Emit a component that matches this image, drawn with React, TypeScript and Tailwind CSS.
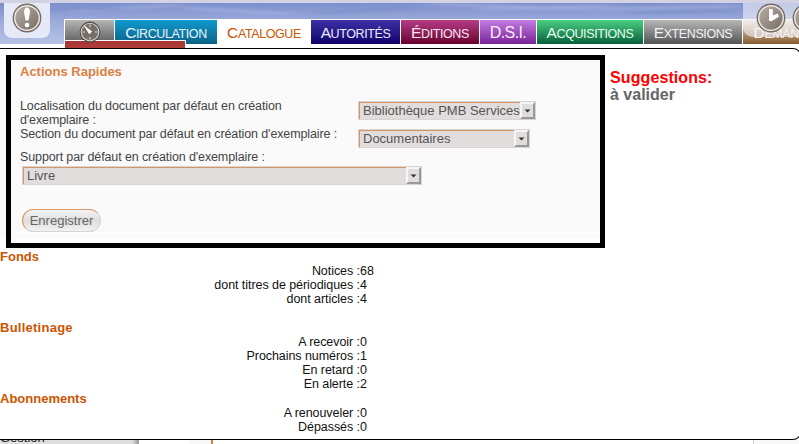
import React from 'react';

type Tab = { label: string; width: string; colors: string; big?: boolean };

const tabs: Tab[] = [
  { label: 'Circulation', width: 'w-[103px]', colors: 'from-[#1199cf] to-[#0b6286] text-[#e6f5fb]' },
  { label: 'Catalogue', width: 'w-[93px]', colors: 'from-white to-white text-[#cc5500]' },
  { label: 'Autorités', width: 'w-[90px]', colors: 'from-[#3e30a8] to-[#11006a] text-[#eeeaff]' },
  { label: 'Éditions', width: 'w-[79px]', colors: 'from-[#b73b88] to-[#68002e] text-[#fbe4f1]' },
  { label: 'D.S.I.', width: 'w-[57px]', colors: 'from-[#c17be0] to-[#7a2199] text-[#f8ebff]', big: true },
  { label: 'Acquisitions', width: 'w-[107px]', colors: 'from-[#4bd083] to-[#04613a] text-[#e5fff0]' },
  { label: 'Extensions', width: 'w-[99px]', colors: 'from-[#b8b8b8] to-[#555555] text-[#f3f3f3]' },
  { label: 'Demandes', width: 'w-[92px]', colors: 'from-[#efe5cf] to-[#875b30] text-[#fffaf0]' },
];

function Disc({ size, children }: { size: number; children?: React.ReactNode }) {
  return (
    <svg width={size} height={size} viewBox="0 0 30 30" className="block shrink-0">
      <defs>
        <linearGradient id="disc" x1="0" y1="0" x2="1" y2="1">
          <stop offset="0" stopColor="#b8b0a8" />
          <stop offset="1" stopColor="#756b62" />
        </linearGradient>
      </defs>
      <circle cx="15" cy="15" r="14.4" fill="#756c65" />
      <circle cx="15" cy="15" r="12.3" fill="url(#disc)" stroke="#eee9e5" strokeWidth="1.4" />
      {children}
    </svg>
  );
}

function Gauge() {
  return (
    <svg width="22" height="22" viewBox="0 0 22 22" className="block">
      <circle cx="11" cy="11" r="10.4" fill="#4a4541" />
      <circle cx="11" cy="11" r="8.8" fill="#766e67" stroke="#d8d3ce" strokeWidth="1.1" />
      <path d="M11 3.5v2.5M11 16v2.5M3.5 11h2.5M16 11h2.5" stroke="#ded9d3" strokeWidth="1.2" />
      <path d="M5.6 5.2L12.5 10.5L10.5 12.8Z" fill="#fff" stroke="#fff" strokeWidth="1" />
    </svg>
  );
}

function Select({ value, className }: { value: string; className: string }) {
  return (
    <div className={`flex h-[19px] border border-[#d7d5d4] bg-[#e1dddc] ${className}`}>
      <div className="min-w-0 flex-1 whitespace-nowrap border-l border-t border-[#d99560] pl-[3px] text-[13px] leading-[16px] text-[#555]">
        {value}
      </div>
      <div className="flex w-[15px] shrink-0 items-center justify-center border-2 border-b-[#999] border-l-[#f5f5f5] border-r-[#999] border-t-[#f5f5f5] bg-[#e1dddc]">
        <svg width="7" height="4" viewBox="0 0 7 4"><path d="M0.5 0.5h6L3.5 3.6Z" fill="#333" /></svg>
      </div>
    </div>
  );
}

function Group({ title, rows, className, titleClass = '' }: { title: string; rows: [string, string][]; className: string; titleClass?: string }) {
  return (
    <section className={`shrink-0 ${className}`}>
      <h2 className={`h-[15px] text-[13px] font-bold leading-[15px] text-[#cc5500] ${titleClass}`}>{title}</h2>
      {rows.map(([name, count]) => (
        <div key={name} className="flex h-[14px] text-[12.5px] leading-[14px] text-[#111]">
          <span className="w-[360px] whitespace-nowrap text-right tracking-[-0.06px]">{name} :</span>
          <span>{count}</span>
        </div>
      ))}
    </section>
  );
}

export default function App() {
  return (
    <div className="relative flex h-[444px] w-[799px] flex-col overflow-hidden bg-white font-['Liberation_Sans',Arial,sans-serif]">
      <header className="relative h-[48px] shrink-0">
        <div className="h-[3px] bg-[#d2d2e3]" />
        <div className="h-[41px] bg-linear-to-b from-[#7d8fcc] via-[#a0aedc] to-[#b5c2e5]">
          <svg width="799" height="17" viewBox="0 0 799 17" preserveAspectRatio="none">
            <defs><filter id="soft"><feGaussianBlur stdDeviation="8 1.5" /></filter></defs>
            <g filter="url(#soft)" fill="none" stroke="#b2c4eb" strokeWidth="2" opacity=".6">
              <path d="M70 8L180 2M185 5L290 11M430 1L590 6M480 6L610 3M600 6L740 3" />
              <path d="M10 8L120 5M320 10L410 5M630 10L730 8" stroke="#6f83c5" />
            </g>
          </svg>
        </div>
        <nav className="absolute left-[64px] top-[19px] flex h-[25px] border-l border-t border-white bg-white">
          <div className="w-[50px] border-r border-white bg-linear-to-b from-[#b5b5b5] to-[#5c5c5c]" />
          {tabs.map((t) => (
            <div key={t.label} className={`flex h-[24px] shrink-0 justify-center border-r border-white bg-linear-to-b ${t.width} ${t.colors}`}>
              <span className={t.big ? 'block whitespace-nowrap pt-[1px] text-[16px] leading-[24px] tracking-[-0.6px]' : 'block whitespace-nowrap pt-[1px] text-[12.5px] uppercase leading-[24px] tracking-[-0.4px] first-letter:text-[15.5px]'}>{t.label}</span>
            </div>
          ))}
        </nav>
        <div className="absolute left-[64px] top-[40px] h-[8px] w-[122px] border-x border-t border-white bg-linear-to-b from-[#a93434] to-[#b13c3c]" />
        <div className="absolute left-[79px] top-[21px]"><Gauge /></div>
        <div className="absolute left-[4px] top-[3px] flex h-[35px] w-[46px] justify-center rounded-b-[8px] bg-[#e5eaf6]">
          <Disc size={30}>
            <path d="M12 9C12 3 18 3 18 9L16.5 17.5H13.5Z" fill="#fff" />
            <circle cx="15" cy="22" r="2.3" fill="#fff" />
          </Disc>
        </div>
        <div className="absolute left-[743px] top-[3px] flex h-[34px] w-[90px] gap-[6px] rounded-bl-[10px] bg-[#f0f2f8]/60 pl-[13px]">
          <Disc size={30}><path d="M13 6h3.8v6.4l5-2 1.2 3L16 18h-3Z" fill="#fff" /></Disc>
          <Disc size={30}><path d="M8 15h14" stroke="#fff" strokeWidth="3" /></Disc>
        </div>
      </header>

      <main className="flex h-[392px] w-[801px] shrink-0 flex-col rounded-r-[8px] border-y border-r border-black bg-white">
        <div className="flex h-[199px] shrink-0">
          <div className="mt-[10px] h-[180px] w-[6px] shrink-0 bg-[#fafafa]" />
          <form className="mt-[6px] flex h-[193px] w-[599px] shrink-0 flex-col border-[5px] border-black bg-white">
            <div className="flex h-[179px] flex-col bg-[#fafafa] pl-[9px] text-[12.5px] leading-[14px] text-[#444]">
              <h1 className="mt-[4px] text-[13px] font-bold leading-[15px] text-[#dd7f43]">Actions Rapides</h1>
              <div className="mt-[20px] flex h-[51px]">
                <div className="w-[338px] shrink-0 whitespace-nowrap tracking-[-0.11px]">
                  <p>Localisation du document par défaut en création<br />d'exemplaire :</p>
                  <p>Section du document par défaut en création d'exemplaire :</p>
                </div>
                <div className="flex flex-col gap-[9px] pt-[2px]">
                  <Select value="Bibliothèque PMB Services" className="w-[178px]" />
                  <Select value="Documentaires" className="w-[172px]" />
                </div>
              </div>
              <p className="tracking-[-0.11px]">Support par défaut en création d'exemplaire :</p>
              <Select value="Livre" className="ml-[2px] mt-[2px] w-[400px] shrink-0" />
              <button type="button" className="ml-[2px] mt-[24px] h-[23px] w-[79px] shrink-0 rounded-full border border-[#d7d5d4] border-l-[#d99560] border-t-[#d99560] bg-linear-to-b from-[#f6f5f5] via-[#dfdddd] to-[#f2f2f2] text-[13px] leading-[20px] text-[#666]">Enregistrer</button>
            </div>
          </form>
          <aside className="pl-[5px] pt-[20px] text-[16px] font-bold leading-[17px]">
            <p className="tracking-[0.1px] text-[#ff0000]">Suggestions:</p>
            <p className="text-[#666]">à valider</p>
          </aside>
        </div>
        <Group title="Fonds" className="mt-[1px] h-[71px]" rows={[['Notices', '68'], ['dont titres de périodiques', '4'], ['dont articles', '4']]} />
        <Group title="Bulletinage" titleClass="tracking-[0.25px]" className="h-[71px]" rows={[['A recevoir', '0'], ['Prochains numéros', '1'], ['En retard', '0'], ['En alerte', '2']]} />
        <Group title="Abonnements" className="h-[44px]" rows={[['A renouveler', '0'], ['Dépassés', '0']]} />
      </main>
      <footer className="flex h-[4px] shrink-0 overflow-hidden">
        <div className="h-[4px] w-[139px] overflow-hidden bg-linear-to-r from-[#dedede] from-95% to-[#999]">
          <span className="-mt-[9px] block text-[13px] leading-[14px] text-[#222]">Gestion</span>
        </div>
        <div className="ml-[50px] w-[22px] bg-[#f8f8f8]" />
        <div className="w-[2px] bg-[#dd7f43]" />
        <div className="w-[540px] bg-white" />
        <div className="flex-1 border-l border-[#ccc] bg-[#f8f8f8]" />
      </footer>
    </div>
  );
}
